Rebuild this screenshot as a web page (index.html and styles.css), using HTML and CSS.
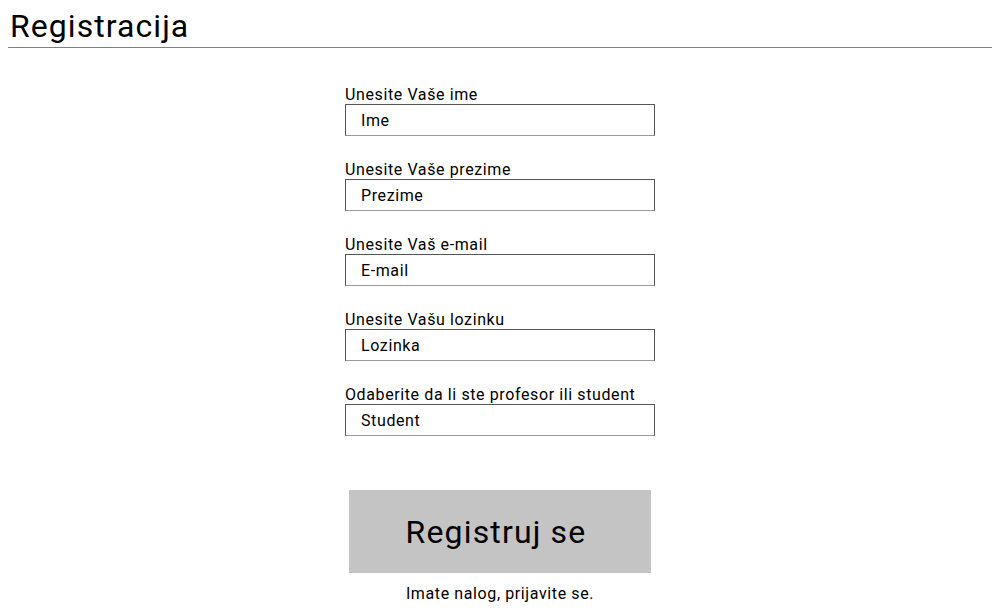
FILE: index.html
```html
<!DOCTYPE html>
<html lang="sr">
<head>
<meta charset="utf-8">
<title>Registracija</title>
<link rel="stylesheet" href="styles.css">
</head>
<body>
<div class="page">
  <header class="header">
    <h1 class="title">Registracija</h1>
  </header>
  <form class="form">
    <div class="field">
      <label class="label" for="ime">Unesite Vaše ime</label>
      <input class="input" id="ime" type="text" value="Ime">
    </div>
    <div class="field">
      <label class="label" for="prezime">Unesite Vaše prezime</label>
      <input class="input" id="prezime" type="text" value="Prezime">
    </div>
    <div class="field">
      <label class="label" for="email">Unesite Vaš e-mail</label>
      <input class="input" id="email" type="text" value="E-mail">
    </div>
    <div class="field">
      <label class="label" for="lozinka">Unesite Vašu lozinku</label>
      <input class="input" id="lozinka" type="text" value="Lozinka">
    </div>
    <div class="field">
      <label class="label" for="uloga">Odaberite da li ste profesor ili student</label>
      <input class="input" id="uloga" type="text" value="Student">
    </div>
    <button class="button" type="button">Registruj se</button>
    <p class="login">Imate nalog, prijavite se.</p>
  </form>
</div>
</body>
</html>
```

FILE: styles.css
```css
html, body {
  margin: 0;
  padding: 0;
  background: #ffffff;
}

body {
  font-family: Roboto, "Liberation Sans", sans-serif;
  color: #000000;
  letter-spacing: 0.038em;
}

.page {
  margin: 0 12px 0 8px;
}

.header {
  padding: 7px 0 2px 2px;
  border-bottom: 1px solid #808080;
}

.title {
  margin: 0;
  font-size: 32px;
  font-weight: 400;
  line-height: 38px;
  letter-spacing: 0.033em;
}

.form {
  display: flex;
  flex-direction: column;
  align-items: center;
  padding-top: 37px;
}

.field {
  width: 310px;
  display: flex;
  flex-direction: column;
  margin-bottom: 24px;
}

.field:last-of-type {
  margin-bottom: 23px;
}

.label {
  font-size: 16px;
  line-height: 19px;
  white-space: nowrap;
}

.input {
  box-sizing: border-box;
  width: 310px;
  height: 32px;
  margin: 0;
  padding: 0 15px;
  border: 1px solid #555555;
  border-bottom-color: #9a9a9a;
  border-radius: 0;
  font-family: Roboto, "Liberation Sans", sans-serif;
  font-size: 16px;
  letter-spacing: 0.038em;
  color: #000000;
  background: #ffffff;
  outline: none;
}

.button {
  margin-top: 31px;
  width: 302px;
  height: 83px;
  border: none;
  background: #c4c4c4;
  font-family: Roboto, "Liberation Sans", sans-serif;
  font-size: 32px;
  letter-spacing: 0.036em;
  color: #000000;
  padding: 0 8px 0 0;
}

.login {
  margin: 11px 0 0;
  font-size: 16px;
  line-height: 19px;
}
```
